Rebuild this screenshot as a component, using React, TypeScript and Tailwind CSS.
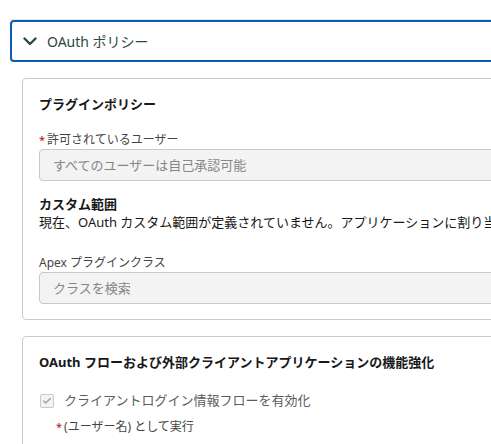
import { Check } from "lucide-react"

interface FieldProps {
  label: string
  placeholder: string
  required?: boolean
}

function RequiredMark() {
  return <span className="mr-[2px] text-[11px] text-[#ba0517]">*</span>
}

function ReadonlyField({ label, placeholder, required }: FieldProps) {
  return (
    <div>
      <div className="text-[12px] leading-[18px] text-[#444444]">
        {required && <RequiredMark />}
        {label}
      </div>
      <div className="h-8 rounded-[4px] border border-[#c9c9c9] bg-[#f3f3f3] px-[13px] text-[13px] leading-[30px] text-[#868686]">
        {placeholder}
      </div>
    </div>
  )
}

function Chevron() {
  return (
    <svg width="14" height="9" viewBox="0 0 14 9" fill="none" className="text-[#2c4a3a]">
      <polyline points="1.5,1.5 7,7 12.5,1.5" stroke="currentColor" strokeWidth="2.4" strokeLinecap="round" strokeLinejoin="round" />
    </svg>
  )
}

export default function App() {
  return (
    <div className="h-[444px] w-[491px] overflow-hidden bg-white font-['Noto_Sans','Noto_Sans_CJK_JP',sans-serif]">
      <div className="ml-[10px] mt-[19px] w-[820px] border-t border-[#e5e5e5]">
        {/* Accordion header (focused) */}
        <button className="flex h-[42px] w-full items-center gap-[10px] rounded-[4px] border-2 border-[#0b5cab] pl-[11px] text-left">
          <Chevron />
          <span className="text-[14px] text-[#2c4a3a]">OAuth ポリシー</span>
        </button>

        <div className="ml-[12px] mt-4 flex flex-col gap-4">
          {/* Plugin policy */}
          <section className="w-[780px] rounded-[4px] border border-[#c9c9c9] px-4 pb-[15px] pt-4">
            <h3 className="text-[13px] font-bold leading-[18px] text-[#181818]">プラグインポリシー</h3>
            <div className="mt-[18px]">
              <ReadonlyField label="許可されているユーザー" placeholder="すべてのユーザーは自己承認可能" required />
            </div>
            <div className="mt-[14px]">
              <div className="text-[13px] font-bold leading-[18px] text-[#181818]">カスタム範囲</div>
              <p className="whitespace-nowrap text-[13px] leading-[18px] text-[#181818]">
                現在、OAuth カスタム範囲が定義されていません。アプリケーションに割り当てる範囲を追加してください。
              </p>
            </div>
            <div className="mt-[23px]">
              <ReadonlyField label="Apex プラグインクラス" placeholder="クラスを検索" />
            </div>
          </section>

          {/* OAuth flow enhancements */}
          <section className="w-[780px] rounded-[4px] border border-[#c9c9c9] px-4 pb-24 pt-4">
            <h3 className="text-[13px] font-bold leading-[18px] text-[#181818]">
              OAuth フローおよび外部クライアントアプリケーションの機能強化
            </h3>
            <label className="mt-5 flex h-5 items-center gap-[10px]">
              <span className="ml-px flex h-[14px] w-[14px] items-center justify-center rounded-[2px] border border-[#c9c9c9] bg-[#f3f3f3]">
                <Check className="h-[10px] w-[10px] text-[#a0a0a0]" strokeWidth={3.5} />
              </span>
              <span className="text-[13px] text-[#5c5c5c]">クライアントログイン情報フローを有効化</span>
            </label>
            <div className="ml-[17px] mt-[7px] text-[12px] leading-[18px] text-[#444444]">
              <RequiredMark />
              (ユーザー名) として実行
            </div>
          </section>
        </div>
      </div>
    </div>
  )
}
